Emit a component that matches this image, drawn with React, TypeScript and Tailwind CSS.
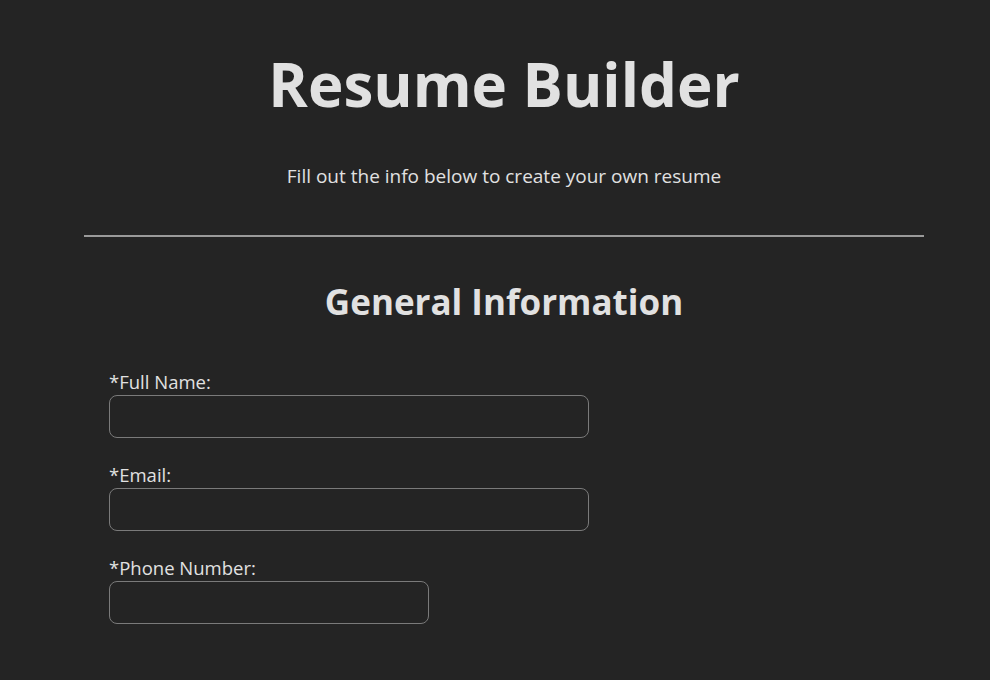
export default function App() {
  return (
    <div className="min-h-screen bg-[#242424] text-[#e1e1e1] font-['Open_Sans',sans-serif]">
      <div className="ml-[84px] w-[840px] pt-[52px]">
        <h1 className="text-center text-[60px] font-bold leading-[64px]">Resume Builder</h1>
        <p className="mt-[47px] text-center text-[19px] leading-[26px]">Fill out the info below to create your own resume</p>
        <hr className="mt-[46px] border-0 border-t-2 border-[#9a9a9a]" />
        <section className="pt-[43px]">
          <h2 className="text-center text-[35px] font-bold leading-[44px]">General Information</h2>
          <form className="mt-[45px] pl-[25px] flex flex-col gap-[24px]">
            <label className="flex flex-col text-[18.5px] leading-[26px]">
              *Full Name:
              <input type="text" className="w-[480px] h-[43px] rounded-[8px] border border-[#7a7a7a] bg-[#242424]" />
            </label>
            <label className="flex flex-col text-[18.5px] leading-[26px]">
              *Email:
              <input type="email" className="w-[480px] h-[43px] rounded-[8px] border border-[#7a7a7a] bg-[#242424]" />
            </label>
            <label className="flex flex-col text-[18.5px] leading-[26px]">
              *Phone Number:
              <input type="tel" className="w-[320px] h-[43px] rounded-[8px] border border-[#7a7a7a] bg-[#242424]" />
            </label>
          </form>
        </section>
      </div>
    </div>
  )
}
